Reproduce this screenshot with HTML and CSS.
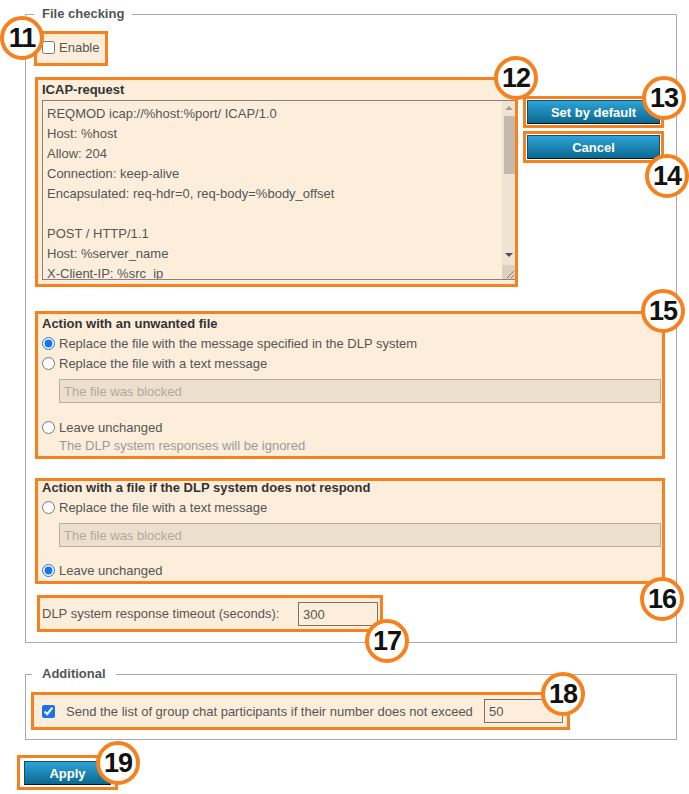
FILE: index.html
```html
<!DOCTYPE html>
<html lang="en">
<head>
<meta charset="utf-8">
<title>File checking</title>
<link rel="stylesheet" href="styles.css">
</head>
<body>
<div class="page">
  <fieldset class="group main">
    <legend>File checking</legend>
    <label class="hl enable"><input type="checkbox" class="chk"><span>Enable</span></label>

    <div class="icap-row">
      <div class="hl icap">
        <div class="title">ICAP-request</div>
        <div class="ta-wrap">
          <textarea class="ta" readonly>REQMOD icap://%host:%port/ ICAP/1.0
Host: %host
Allow: 204
Connection: keep-alive
Encapsulated: req-hdr=0, req-body=%body_offset

POST / HTTP/1.1
Host: %server_name
X-Client-IP: %src_ip
X-Client-Username: %user</textarea>
          <div class="sb">
            <div class="sb-btn"><span class="arr up"></span></div>
            <div class="sb-thumb"></div>
            <div class="sb-space"></div>
            <div class="sb-btn"><span class="arr down"></span></div>
            <div class="sb-corner">
              <svg width="12" height="12" viewBox="0 0 12 12"><path d="M11 4 L4 11 M11 8 L8 11" stroke="#8a8078" stroke-width="1" fill="none"/></svg>
            </div>
          </div>
        </div>
      </div>
      <div class="btn-col">
        <div class="hl btn-hl"><button class="btn wide">Set by default</button></div>
        <div class="hl btn-hl"><button class="btn wide">Cancel</button></div>
      </div>
    </div>

    <div class="hl action a1">
      <div class="title">Action with an unwanted file</div>
      <label class="opt"><input type="radio" name="unw" checked><span>Replace the file with the message specified in the DLP system</span></label>
      <label class="opt"><input type="radio" name="unw"><span>Replace the file with a text message</span></label>
      <input type="text" class="blocked" value="The file was blocked" disabled>
      <label class="opt gap"><input type="radio" name="unw"><span>Leave unchanged</span></label>
      <div class="note">The DLP system responses will be ignored</div>
    </div>

    <div class="hl action a2">
      <div class="title">Action with a file if the DLP system does not respond</div>
      <label class="opt"><input type="radio" name="nr"><span>Replace the file with a text message</span></label>
      <input type="text" class="blocked" value="The file was blocked" disabled>
      <label class="opt gap2"><input type="radio" name="nr" checked><span>Leave unchanged</span></label>
    </div>

    <div class="hl timeout">
      <span>DLP system response timeout (seconds):</span>
      <input type="text" class="field t-field" value="300">
    </div>
  </fieldset>

  <fieldset class="group extra">
    <legend>Additional</legend>
    <div class="hl participants">
      <input type="checkbox" class="chk" checked>
      <span class="p-text">Send the list of group chat participants if their number does not exceed</span>
      <input type="text" class="field p-field" value="50">
    </div>
  </fieldset>

  <div class="hl apply-hl"><button class="btn apply">Apply</button></div>

  <div class="badge b11">11</div>
  <div class="badge b12">12</div>
  <div class="badge b13">13</div>
  <div class="badge b14">14</div>
  <div class="badge b15">15</div>
  <div class="badge b16">16</div>
  <div class="badge b17">17</div>
  <div class="badge b18">18</div>
  <div class="badge b19">19</div>
</div>
</body>
</html>
```

FILE: styles.css
```css
* { box-sizing: border-box; }

body {
  margin: 0;
  background: #ffffff;
  font-family: "Liberation Sans", Arial, sans-serif;
  font-size: 13px;
  color: #555555;
}

.page {
  position: relative;
  width: 689px;
  min-height: 794px;
}

/* fieldsets */
.group {
  border: 1px solid #aaaaaa;
  min-inline-size: 0;
}

.group legend {
  font-weight: bold;
  font-size: 13px;
  line-height: 16px;
  color: #555555;
}

.main {
  margin: 6px 0 0 25px;
  width: 652px;
  padding: 0 0 10px 8px;
}

.main legend {
  padding: 0 8px;
}

.extra {
  margin: 23px 0 0 25px;
  width: 652px;
  padding: 0 0 9px 5px;
}

.extra legend {
  margin-left: 1px;
  padding: 0 10px;
}

/* orange highlight boxes */
.hl {
  border: 3px solid #f5821f;
  background: #fdeedc;
}

.enable {
  margin-top: 9px;
  display: flex;
  align-items: center;
  width: 74px;
  height: 35px;
  padding-left: 5px;
  padding-bottom: 2px;
}

.chk {
  margin: 0;
  width: 13px;
  height: 13px;
  accent-color: #1a73e8;
}

.enable span {
  margin-left: 4px;
}

/* ICAP row */
.icap-row {
  margin-top: 11px;
  display: flex;
  align-items: flex-start;
  gap: 5px;
}

.icap {
  margin-left: 1px;
  width: 483px;
  height: 210px;
  padding: 2px 0 0 4px;
}

.title {
  font-weight: bold;
  color: #333333;
  line-height: 15px;
}

.ta-wrap {
  margin-top: 3px;
  height: 180px;
  display: flex;
  border: 1px solid #8c8177;
  border-right: none;
}

.ta {
  flex: 1;
  border: none;
  background: transparent;
  resize: none;
  overflow: hidden;
  padding: 3px 4px;
  margin: 0;
  font-family: "Liberation Sans", Arial, sans-serif;
  font-size: 13px;
  line-height: 20px;
  color: #555555;
  outline: none;
}

/* fake scrollbar */
.sb {
  width: 13px;
  background: #efe3d3;
  display: flex;
  flex-direction: column;
}

.sb-btn {
  height: 14px;
  display: flex;
  align-items: center;
  justify-content: center;
}

.arr {
  width: 0;
  height: 0;
  border-left: 4px solid transparent;
  border-right: 4px solid transparent;
}

.arr.up {
  border-bottom: 4px solid #a89f96;
}

.arr.down {
  border-top: 4px solid #505050;
}

.sb-thumb {
  margin: 1px 0 0 2px;
  height: 58px;
  background: #c3b9ad;
}

.sb-space {
  flex: 1;
}

.sb-corner {
  height: 14px;
  margin-top: 3px;
  background: #dcd0c1;
  display: flex;
  align-items: flex-end;
  justify-content: flex-end;
}

.sb-corner svg {
  display: block;
}

/* buttons */
.btn-col {
  margin-top: 19px;
  display: flex;
  flex-direction: column;
  gap: 3px;
}

.btn-hl {
  width: 141px;
  height: 32px;
  padding: 1px;
  background: #ffffff;
  display: flex;
  justify-content: center;
}

.btn {
  height: 24px;
  margin: 0;
  padding: 0;
  border: 1px solid #0d4f6d;
  border-bottom-color: #02151f;
  background: linear-gradient(#2ea3d6, #0b6890);
  color: #ffffff;
  font-family: "Liberation Sans", Arial, sans-serif;
  font-weight: bold;
  font-size: 13px;
}

.wide {
  width: 133px;
}

/* action boxes */
.action {
  margin-left: 1px;
  width: 630px;
  padding: 3px 0 0 0;
}

.action .title {
  padding-left: 4px;
  line-height: 14px;
}

.a1 {
  margin-top: 24px;
  height: 148px;
}

.a2 {
  margin-top: 19px;
  height: 106px;
  padding-top: 0;
}

.opt {
  display: flex;
  align-items: center;
  height: 20px;
  padding-left: 4px;
}

.action .title + .opt {
  margin-top: 2px;
}

.opt input {
  margin: 0 4px 0 0;
  width: 13px;
  height: 13px;
  accent-color: #1a73e8;
}

.opt.gap {
  margin-top: 14px;
}

.opt.gap2 {
  margin-top: 13px;
}

.blocked {
  display: block;
  margin: 6px 0 0 21px;
  width: 602px;
  height: 24px;
  border: 1px solid #bbae9f;
  background: #ecdfce;
  color: #b3a89c;
  padding: 0 4px;
  font-family: "Liberation Sans", Arial, sans-serif;
  font-size: 13px;
}

.note {
  padding-left: 21px;
  line-height: 18px;
  color: #9a9a9a;
}

/* timeout */
.timeout {
  margin: 11px 0 0 3px;
  width: 346px;
  height: 37px;
  display: flex;
  align-items: center;
  padding-left: 2px;
}

.field {
  height: 24px;
  border: 1px solid #7d7166;
  background: transparent;
  color: #555555;
  padding: 0 4px;
  font-family: "Liberation Sans", Arial, sans-serif;
  font-size: 13px;
}

.t-field {
  margin: 1px 2px 0 auto;
  width: 80px;
}

/* additional */
.participants {
  margin-top: 10px;
  width: 539px;
  height: 38px;
  display: flex;
  align-items: center;
  padding-left: 8px;
}

.p-text {
  margin-left: 11px;
}

.p-field {
  margin: 0 4px 0 auto;
  width: 79px;
}

/* apply */
.apply-hl {
  margin: 15px 0 0 17px;
  width: 101px;
  height: 35px;
  padding: 3px 0 0 4px;
  background: #ffffff;
}

.apply {
  width: 87px;
}

/* annotation badges */
.badge {
  position: absolute;
  width: 44px;
  height: 44px;
  border: 4px solid #f5821f;
  border-radius: 50%;
  background: #ffffff;
  color: #111111;
  font-family: "Liberation Sans", Arial, sans-serif;
  font-weight: bold;
  font-size: 27px;
  line-height: 36px;
  text-align: center;
  letter-spacing: -1px;
}

.b11 { left: 0; top: 10px; }
.b12 { left: 494px; top: 50px; }
.b13 { left: 642px; top: 70px; }
.b14 { left: 645px; top: 148px; }
.b15 { left: 641px; top: 283px; }
.b16 { left: 640px; top: 571px; }
.b17 { left: 365px; top: 613px; }
.b18 { left: 541px; top: 666px; }
.b19 { left: 96px; top: 735px; }
```
